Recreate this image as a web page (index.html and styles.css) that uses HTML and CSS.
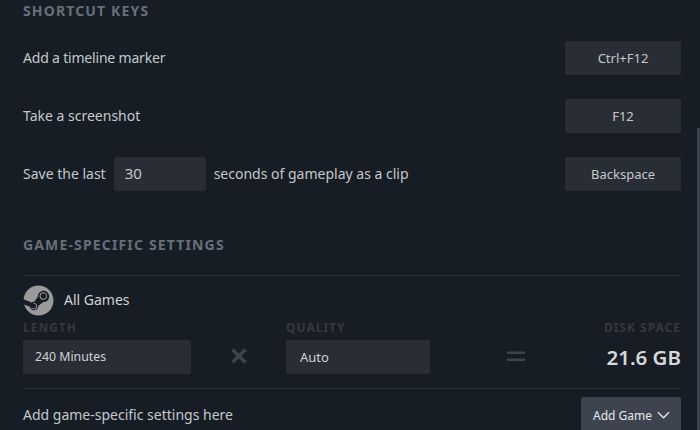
FILE: index.html
```html
<!DOCTYPE html>
<html lang="en">
<head>
    <meta charset="UTF-8">
    <meta name="viewport" content="width=device-width, initial-scale=1.0">
    <title>Game Recording</title>
    <link rel="stylesheet" href="styles.css">
</head>
<body>

<div class="scrollbar"></div>

<div class="page">
    <h2 class="section-title">Shortcut Keys</h2>

    <div class="shortcut-row">
        <span class="row-text marker-text">Add a timeline marker</span>
        <button class="key-btn">Ctrl+F12</button>
    </div>
    <div class="shortcut-row">
        <span class="row-text">Take a screenshot</span>
        <button class="key-btn">F12</button>
    </div>
    <div class="shortcut-row">
        <div class="clip-label">
            <span class="row-text">Save the last</span>
            <div class="seconds-box">30</div>
            <span class="row-text">seconds of gameplay as a clip</span>
        </div>
        <button class="key-btn">Backspace</button>
    </div>

    <h2 class="section-title game-title">Game-Specific Settings</h2>

    <div class="game-block">
        <div class="game-name">
            <svg class="steam-icon" viewBox="0 0 32 32">
                <path fill="#9a9a9a" d="M16 .5C7.9.5 1.2 6.8.6 14.7l8.3 3.4c.7-.5 1.6-.8 2.5-.8h.3l3.7-5.4v-.1c0-3.2 2.6-5.8 5.8-5.8s5.8 2.6 5.8 5.8-2.6 5.8-5.8 5.8h-.1l-5.3 3.8v.2c0 2.4-2 4.4-4.4 4.4-2.1 0-3.9-1.500-4.3-3.500L1.2 20.100C3.100 26.600 9 31.500 16 31.500c8.600 0 15.500-6.900 15.500-15.500S24.600.5 16 .5z"/>
                <path fill="#9a9a9a" d="M10.300 24.100l-1.900-.8c.3.7.9 1.300 1.700 1.600 1.700.7 3.600-.1 4.300-1.800.3-.8.3-1.700 0-2.500s-1-1.500-1.800-1.800c-.8-.3-1.600-.3-2.400 0l2 .8c1.200.5 1.800 1.900 1.300 3.100s-1.900 2-3.200 1.400z"/>
                <path fill="#9a9a9a" fill-rule="evenodd" d="M24.800 11.300c0-2.100-1.700-3.900-3.900-3.900s-3.900 1.700-3.900 3.900 1.700 3.900 3.900 3.900 3.900-1.800 3.900-3.900zm-6.700 0c0-1.600 1.300-2.900 2.900-2.900s2.900 1.300 2.900 2.900-1.300 2.900-2.900 2.900-2.900-1.300-2.900-2.900z"/>
            </svg>
            <span class="row-text">All Games</span>
        </div>

        <div class="size-grid">
            <div class="size-label">Length</div>
            <div></div>
            <div class="size-label">Quality</div>
            <div></div>
            <div class="size-label size-right">Disk Space</div>

            <div class="select-box length-box">240 Minutes</div>
            <svg class="math-sign" viewBox="0 0 16 16">
                <path d="M1.5 1.5l13 13M14.5 1.5l-13 13" stroke="#3d4450" stroke-width="3.8" fill="none"/>
            </svg>
            <div class="select-box quality-box">Auto</div>
            <svg class="math-sign equals-sign" viewBox="0 0 18 16">
                <path d="M0 3.5h18v2.5H0zM0 10.5h18v2.5H0z" fill="#3d4450"/>
            </svg>
            <div class="disk-total">21.6 GB</div>
        </div>
    </div>

    <div class="add-row">
        <span>Add game-specific settings here</span>
        <button class="add-btn">Add Game
            <svg class="chevron" viewBox="0 0 14 8">
                <path d="M1 1l6 6 6-6" stroke="#e6e8ea" stroke-width="1.4" fill="none"/>
            </svg>
        </button>
    </div>
</div>

</body>
</html>
```

FILE: styles.css
```css
html, body {
    margin: 0;
    height: 430px;
    overflow: hidden;
}

body {
    background-color: #171d25;
    color: #c4c8cc;
    font-family: "Noto Sans", Arial, sans-serif;
    font-size: 14px;
    position: relative;
}

/* scrollbar thumb on the right edge */
.scrollbar {
    position: absolute;
    top: 128px;
    right: 0;
    bottom: 0;
    width: 3px;
    background-color: #3d4450;
}

.page {
    padding: 0 19px 0 23px;
}

.section-title {
    margin: 0;
    height: 22px;
    line-height: 22px;
    font-size: 14px;
    font-weight: 700;
    letter-spacing: 1.15px;
    text-transform: uppercase;
    color: #676f7a;
}

.shortcut-row {
    display: flex;
    align-items: center;
    justify-content: space-between;
    height: 34px;
    margin-top: 24px;
}

.shortcut-row:first-of-type {
    margin-top: 19px;
}

.row-text {
    margin-bottom: 2px;
}

.marker-text {
    letter-spacing: -0.19px;
}

.clip-label {
    display: flex;
    align-items: center;
    gap: 8px;
}

.seconds-box {
    width: 81px;
    height: 34px;
    line-height: 32px;
    padding-left: 11px;
    background-color: #292d36;
    border-radius: 2px;
    font-size: 15px;
}

.key-btn {
    width: 116px;
    height: 34px;
    padding: 0;
    border: 0;
    border-radius: 2px;
    background-color: #292d36;
    color: #c4c8cc;
    font-family: inherit;
    font-size: 13px;
}

.game-title {
    margin-top: 43px;
    padding-bottom: 19px;
    border-bottom: 1px solid #2d323b;
}

.game-block {
    padding: 8px 0 14px;
    border-bottom: 1px solid #2d323b;
}

.game-name {
    display: flex;
    align-items: center;
    gap: 10px;
    height: 32px;
    color: #d0d3d6;
}

.steam-icon {
    width: 31px;
    height: 31px;
}

.size-grid {
    display: grid;
    grid-template-columns: 168px 95px 144px 170px 81px;
    align-items: center;
}

.size-label {
    height: 24px;
    line-height: 24px;
    font-size: 12px;
    font-weight: 700;
    letter-spacing: 1px;
    text-transform: uppercase;
    color: #333842;
    white-space: nowrap;
}

.size-right {
    justify-self: end;
}

.select-box {
    height: 34px;
    line-height: 34px;
    background-color: #292d36;
    border-radius: 2px;
    font-size: 13px;
    color: #d0d3d6;
}

.length-box {
    padding-left: 12px;
    font-size: 12.3px;
    line-height: 33px;
}

.quality-box {
    padding-left: 14px;
}

.math-sign {
    justify-self: center;
    width: 16px;
    height: 16px;
    margin-bottom: 2px;
}

.equals-sign {
    width: 18px;
    margin-left: 1px;
}

.disk-total {
    justify-self: end;
    font-size: 20.5px;
    font-weight: 600;
    color: #d6d8da;
    white-space: nowrap;
}

.add-row {
    display: flex;
    align-items: flex-start;
    justify-content: space-between;
    padding-top: 8px;
    line-height: 36px;
}

.add-btn {
    display: flex;
    align-items: center;
    gap: 5px;
    width: 100px;
    height: 36px;
    padding: 0 0 0 12px;
    border: 0;
    border-radius: 2px;
    background-color: #3d4450;
    color: #e6e8ea;
    font-family: inherit;
    font-size: 12px;
}

.chevron {
    width: 13px;
    height: 8px;
}
```
